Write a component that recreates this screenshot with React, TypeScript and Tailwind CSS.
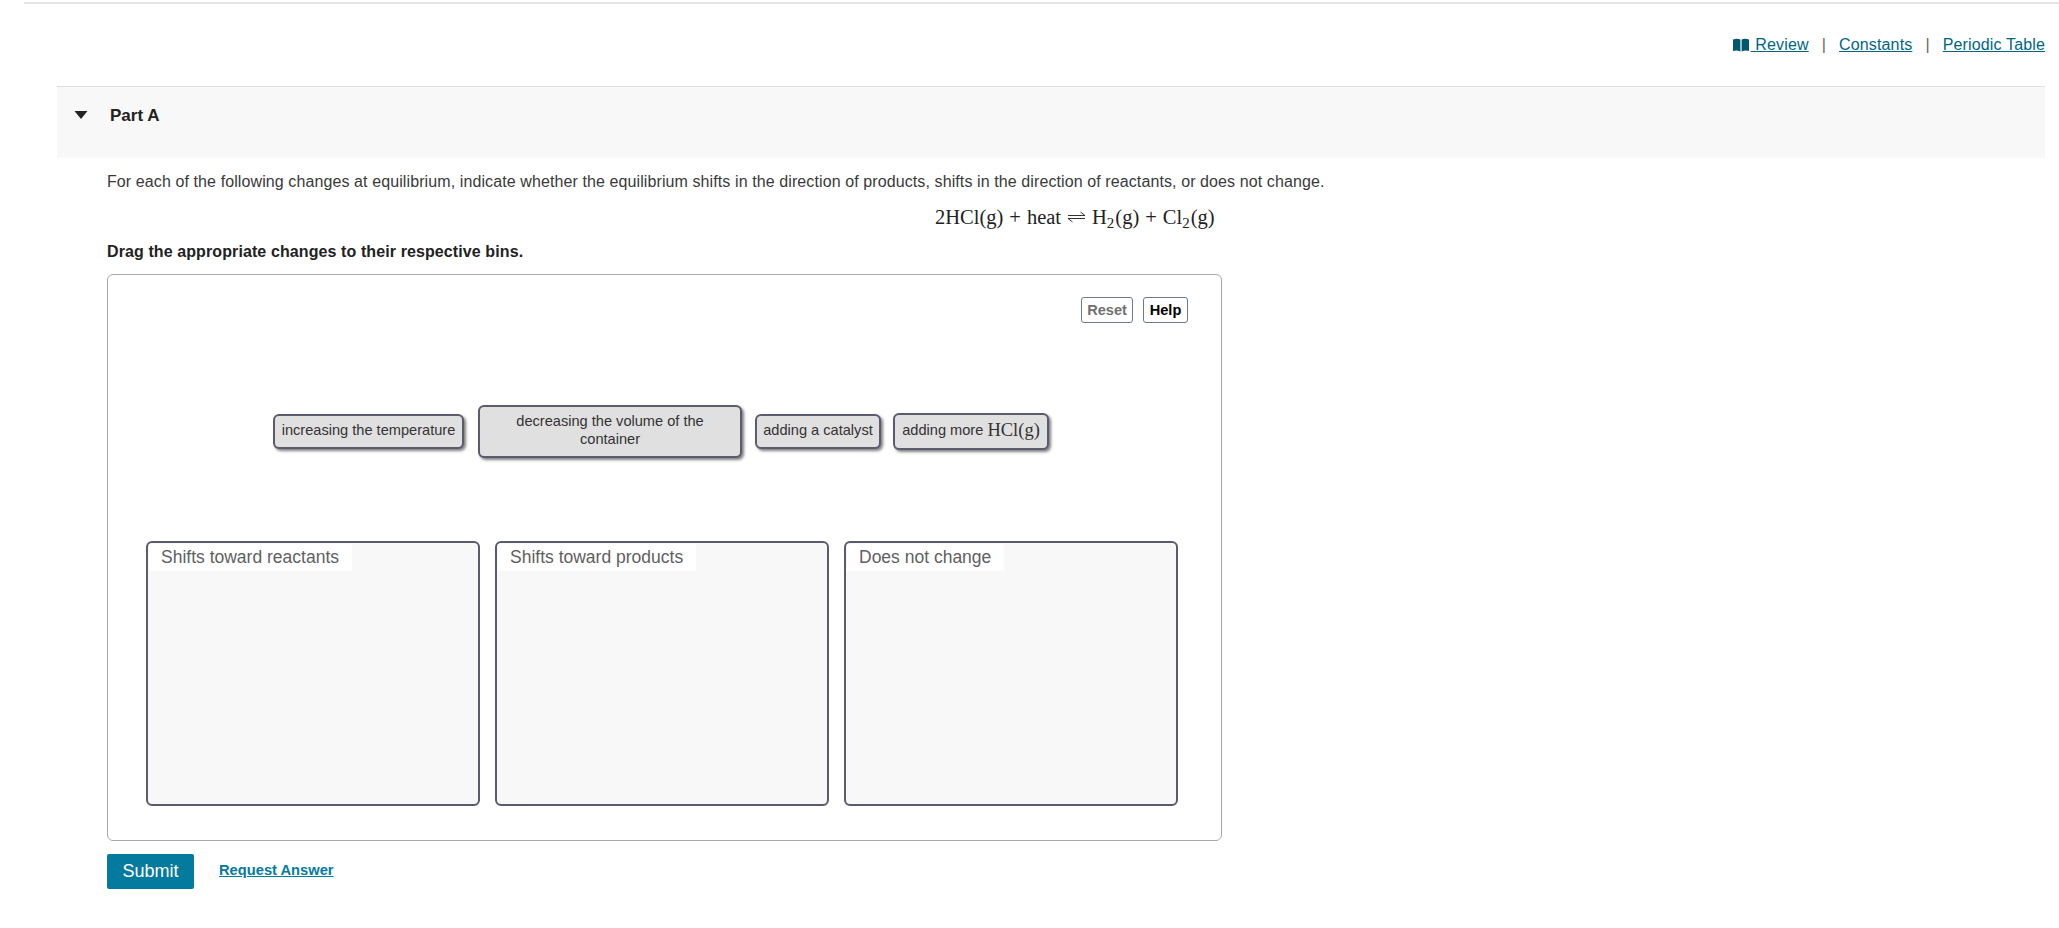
const Sep = () => <span className="mx-[13px] text-[#666]">|</span>;

const Chip = ({ className, children }: { className: string; children: React.ReactNode }) => (
  <div
    className={`box-border flex shrink-0 items-center justify-center rounded-[6px] border-2 border-[#5b5b6e] bg-[#e0e0e0] pb-[3px] text-center text-[14.6px] leading-[18px] text-[#333] shadow-[2px_2px_3px_rgba(0,0,0,0.5)] ${className}`}
  >
    {children}
  </div>
);

const Bin = ({ label }: { label: string }) => (
  <div className="box-border h-[265px] w-[334px] rounded-[6px] border-2 border-[#5b5b6e] bg-[#f8f8f8] pt-px">
    <span className="ml-px inline-block h-[27px] bg-white pl-[12px] pr-[13px] text-[17.5px] leading-[26px] text-[#5f5f5f]">
      {label}
    </span>
  </div>
);

const Serif = ({ children }: { children: React.ReactNode }) => (
  <span className="font-['Liberation_Serif',serif]">{children}</span>
);

const Equation = () => (
  <div className="ml-[828px] mt-[13px] flex h-[24px] items-center whitespace-nowrap font-['Liberation_Serif',serif] text-[20.5px] leading-[24px] text-[#222]">
    <span>2HCl(g)</span>
    <span className="mx-[6px]">+</span>
    <span>heat</span>
    <svg className="mx-[6px]" width="19" height="12" viewBox="0 0 19 12" fill="none" stroke="#333" strokeWidth="1">
      <path d="M1 4.5H18L13.5 1" />
      <path d="M18 7.5H1L5.5 11" />
    </svg>
    <span>
      H<sub className="mr-px text-[15px] leading-none">2</sub>(g)
    </span>
    <span className="mx-[6px]">+</span>
    <span>
      Cl<sub className="mr-px text-[15px] leading-none">2</sub>(g)
    </span>
  </div>
);

const App = () => {
  return (
    <div className="h-[928px] w-full overflow-hidden bg-white font-['Liberation_Sans',Arial,sans-serif] text-[16px] text-[#3a3a3a]">
      <div className="ml-[24px] mt-[2px] h-[2px] bg-[#e4e4e4]" />

      <div className="mr-[14px] mt-[32px] flex h-[18px] items-center justify-end leading-[18px] tracking-[0.15px] text-[#00667f]">
        <svg className="mr-[2px]" width="16" height="14" viewBox="0 0 16 14" fill="#00586f">
          <path d="M0 1.5 Q4 0 7.4 1.5V13.5 Q4 12 0 13Z" />
          <path d="M8.6 1.5 Q12 0 16 1.5V13 Q12 12 8.6 13.5Z" />
        </svg>
        <a className="underline">&nbsp;Review</a>
        <Sep />
        <a className="underline">Constants</a>
        <Sep />
        <a className="underline">Periodic Table</a>
      </div>

      <div className="ml-[57px] mr-[14px] mt-[32px] box-border flex h-[72px] items-start border-t border-[#e0e0e0] bg-[#f8f8f8] pt-[19px]">
        <svg className="ml-[17px] mt-[5px]" width="14" height="8" viewBox="0 0 14 8" fill="#222">
          <path d="M0.5 0H13.5L7 8Z" />
        </svg>
        <span className="ml-[22px] text-[17px] font-bold leading-[20px] text-[#222]">Part A</span>
      </div>

      <div className="ml-[107px]">
        <p className="mt-[14px] leading-[20px] tracking-[0.1px]">
          For each of the following changes at equilibrium, indicate whether the equilibrium shifts in the direction of products, shifts in the direction of reactants, or does not change.
        </p>
        <Equation />
        <p className="mt-[13px] font-bold leading-[20px] tracking-[0.1px] text-[#222]">
          Drag the appropriate changes to their respective bins.
        </p>

        <div className="mt-[12px] box-border h-[567px] w-[1115px] rounded-[6px] border border-[#a8a8a8] bg-white">
          <div className="mr-[33px] mt-[22px] flex justify-end gap-[10px] text-[14.6px] font-bold leading-[22px]">
            <button className="box-border h-[26px] w-[52px] rounded-[3px] border border-[#6d7b80] text-[#707070]">Reset</button>
            <button className="box-border h-[26px] w-[45px] rounded-[3px] border border-[#6d7b80] text-black">Help</button>
          </div>

          <div className="ml-[165px] mt-[82px] flex h-[53px] items-center">
            <Chip className="h-[35px] w-[191px]">increasing the temperature</Chip>
            <Chip className="ml-[14px] h-[53px] w-[264px] px-[20px]">decreasing the volume of the container</Chip>
            <Chip className="ml-[13px] h-[35px] w-[126px]">adding a catalyst</Chip>
            <Chip className="ml-[12px] h-[37px] w-[156px] whitespace-nowrap">
              adding more&nbsp;<span className="text-[18.5px]"><Serif>HCl(g)</Serif></span>
            </Chip>
          </div>

          <div className="ml-[38px] mt-[83px] flex gap-[15px]">
            <Bin label="Shifts toward reactants" />
            <Bin label="Shifts toward products" />
            <Bin label="Does not change" />
          </div>
        </div>

        <div className="mt-[13px] flex items-center">
          <button className="h-[35px] w-[87px] rounded-[2px] bg-[#047a9e] pb-[1px] text-[18px] text-white">Submit</button>
          <a className="mb-[2px] ml-[25px] text-[14.7px] font-bold text-[#047a9e] underline">Request Answer</a>
        </div>
      </div>
    </div>
  );
};

export default App;
